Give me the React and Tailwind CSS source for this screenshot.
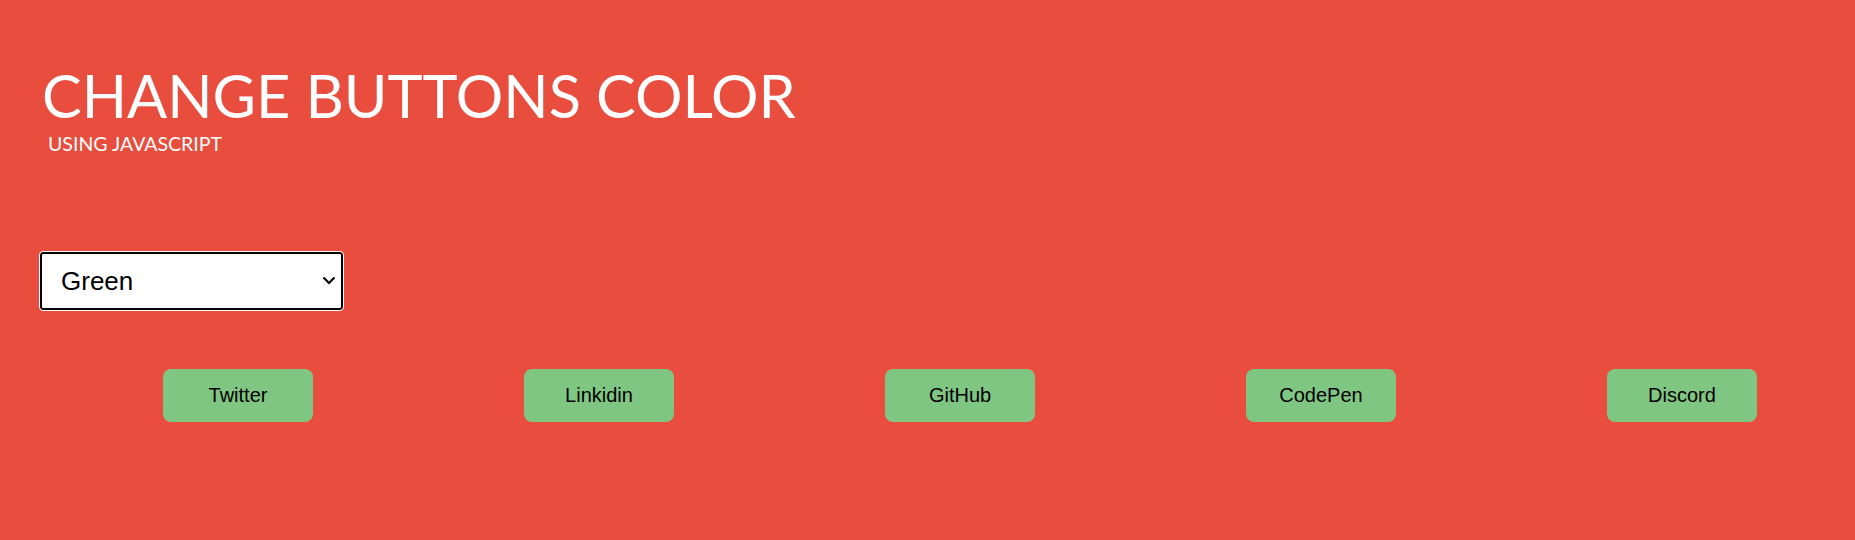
import React, { useState } from 'react';

const links = ['Twitter', 'Linkidin', 'GitHub', 'CodePen', 'Discord'];

const palette = {
  Green: 'bg-[#80c683]',
  Red: 'bg-[#e57373]',
  Blue: 'bg-[#64b5f6]',
  Yellow: 'bg-[#fff176]',
};

export default function App() {
  const [color, setColor] = useState('Green');

  return (
    <div className="w-full h-[540px] bg-[#e84d3d] font-['Liberation_Sans',Arial,sans-serif] overflow-hidden">
      {/* Header */}
      <div className="pt-[60px] pl-[42px]">
        <h1 className="font-['Lato',sans-serif] text-[59.4px] leading-[1.2] font-normal text-white">
          CHANGE BUTTONS COLOR
        </h1>
        <p className="font-['Lato',sans-serif] text-[19.5px] leading-[1.2] text-white pl-[6px] mt-[1px]">
          USING JAVASCRIPT
        </p>
      </div>

      {/* Color picker */}
      <div className="pl-[40px] mt-[96px]">
        <div className="relative w-[303px]">
          <select
            value={color}
            onChange={e => setColor(e.target.value)}
            className="appearance-none w-[303px] h-[58px] pl-[19px] pr-[12px] pt-[2px] text-[26px] text-black bg-white border-2 border-black rounded-[3px] outline outline-1 outline-white"
          >
            {Object.keys(palette).map(c => (
              <option key={c} value={c}>{c}</option>
            ))}
          </select>
          <svg className="absolute right-[7px] top-[24px] w-[14px] h-[9px] pointer-events-none" viewBox="0 0 14 9" fill="none" stroke="black" strokeWidth="2.2">
            <path d="M1.5 1.5 L7 7 L12.5 1.5" />
          </svg>
        </div>
      </div>

      {/* Buttons */}
      <div className="flex gap-[211px] pl-[163px] mt-[59px]">
        {links.map(name => (
          <button
            key={name}
            className={`w-[150px] h-[53px] shrink-0 rounded-[8px] text-[20px] text-black ${palette[color]}`}
          >
            {name}
          </button>
        ))}
      </div>
    </div>
  );
}
